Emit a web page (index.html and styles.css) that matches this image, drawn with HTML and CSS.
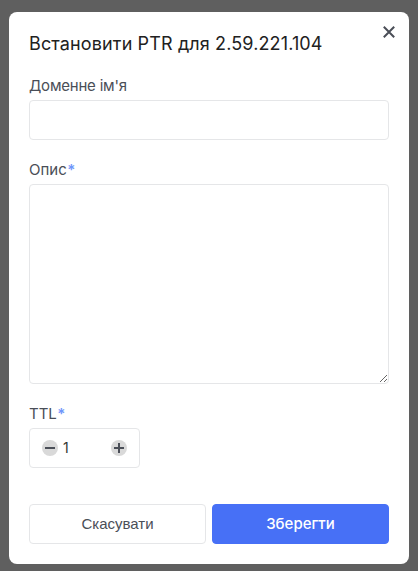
FILE: index.html
```html
<!DOCTYPE html>
<html lang="uk">
<head>
<meta charset="utf-8">
<title>PTR</title>
<link rel="stylesheet" href="styles.css">
</head>
<body>
<form class="modal">
  <button class="close" type="button" aria-label="Закрити">
    <svg width="12" height="12" viewBox="0 0 12 12"><path d="M.8.8l10.4 10.4M11.2.8L.8 11.2" stroke="#4a4e57" stroke-width="2" fill="none"/></svg>
  </button>
  <h1 class="title">Встановити PTR для 2.59.221.104</h1>
  <label class="label domain-label" for="domain">Доменне ім'я</label>
  <input class="input" id="domain" type="text">
  <label class="label" for="desc">Опис<span class="required">*</span></label>
  <textarea class="input area" id="desc"></textarea>
  <label class="label">TTL<span class="required">*</span></label>
  <div class="counter">
    <button class="step" type="button" aria-label="Менше"><svg width="16" height="16" viewBox="0 0 16 16"><path d="M3 8h10" stroke="#4a4e57" stroke-width="2"/></svg></button>
    <span class="value">1</span>
    <button class="step" type="button" aria-label="Більше"><svg width="16" height="16" viewBox="0 0 16 16"><path d="M3 8h10M8 3v10" stroke="#4a4e57" stroke-width="2"/></svg></button>
  </div>
  <div class="actions">
    <button class="btn" type="button">Скасувати</button>
    <button class="btn primary" type="button">Зберегти</button>
  </div>
</form>
</body>
</html>
```
FILE: styles.css
```css
* { box-sizing: border-box; }
body {
  margin: 0;
  padding: 12px 9px 7px;
  background: #5f5f5f;
  font-family: Inter, "Liberation Sans", sans-serif;
  color: #4a4e57;
}
.modal {
  position: relative;
  display: flex;
  flex-direction: column;
  height: 552px;
  padding: 20px;
  border-radius: 8px;
  background: #fff;
}
.close {
  position: absolute;
  top: 14px;
  right: 14px;
  display: flex;
  padding: 0;
  border: 0;
  background: none;
}
.title {
  margin: 0 0 20px;
  font-size: 18px;
  font-weight: 400;
  line-height: 24px;
  letter-spacing: .13px;
  color: #212121;
}
.label {
  height: 20px;
  margin-bottom: 4px;
  font-size: 15px;
  line-height: 20px;
}
.domain-label { letter-spacing: -.2px; }
.required {
  margin-left: .5px;
  font-weight: 600;
  color: #6f96fb;
}
.input {
  display: block;
  width: 100%;
  height: 40px;
  margin: 0 0 20px;
  padding: 8px 12px;
  border: 1px solid #e5e6e8;
  border-radius: 4px;
  background: #fff;
  outline: 0;
  font: inherit;
}
.area { height: 200px; resize: vertical; }
.counter {
  display: flex;
  align-items: center;
  width: 111px;
  height: 40px;
  padding: 0 12px;
  border: 1px solid #e5e6e8;
  border-radius: 4px;
}
.step {
  display: flex;
  width: 16px;
  height: 16px;
  padding: 0;
  border: 0;
  border-radius: 50%;
  background: #d9d9d9;
}
.value {
  flex: 1;
  padding-left: 5px;
  font-size: 14px;
  line-height: 20px;
  color: #333;
}
.actions {
  display: grid;
  grid-template-columns: 1fr 1fr;
  gap: 6px;
  margin-top: auto;
}
.btn {
  height: 40px;
  padding: 0 0 2px;
  border: 1px solid #e5e6e8;
  border-radius: 4px;
  background: #fff;
  font: 15px "Liberation Sans", sans-serif;
  color: #4a4e57;
}
.primary {
  border-color: #4770f6;
  background: #4770f6;
  font-family: Inter, sans-serif;
  font-weight: 500;
  color: #fff;
}
```
